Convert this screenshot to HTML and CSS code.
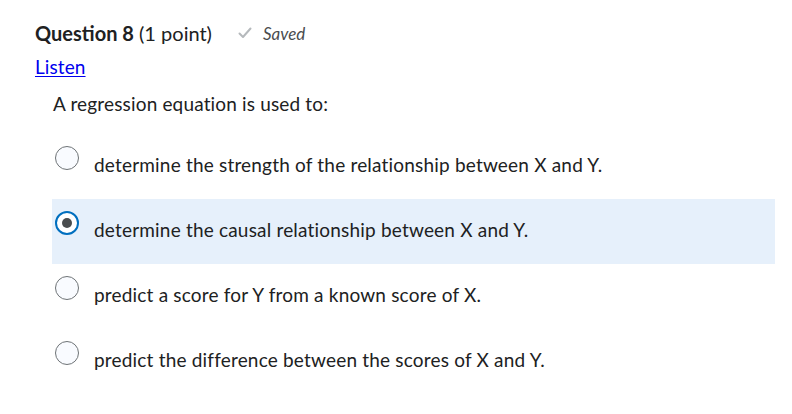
FILE: index.html
```html
<!DOCTYPE html>
<html>
<head>
<meta charset="utf-8">
<link rel="stylesheet" href="styles.css">
</head>
<body>
<div class="question">
  <div class="header">
    <h2 class="title"><strong>Question 8</strong> <span class="points">(1 point)</span></h2>
    <span class="saved">
      <svg class="check" width="14" height="12" viewBox="0 0 14 12"><path d="M1.5 6.5 L5 10 L12.5 1.5" fill="none" stroke="#b5b9bc" stroke-width="2" stroke-linecap="round" stroke-linejoin="round"/></svg>
      <em>Saved</em>
    </span>
  </div>
  <a class="listen" href="#">Listen</a>
  <p class="prompt">A regression equation is used to:</p>
  <div class="options">
    <label class="option"><span class="radio"></span><span class="text">determine the strength of the relationship between X and Y.</span></label>
    <label class="option selected"><span class="radio checked"></span><span class="text">determine the causal relationship between X and Y.</span></label>
    <label class="option"><span class="radio"></span><span class="text">predict a score for Y from a known score of X.</span></label>
    <label class="option"><span class="radio"></span><span class="text">predict the difference between the scores of X and Y.</span></label>
  </div>
</div>
</body>
</html>
```
FILE: styles.css
```css
html, body {
  margin: 0;
  padding: 0;
  background: #ffffff;
}
body {
  font-family: Lato, "Noto Sans", sans-serif;
  color: #202122;
}
.question {
  padding: 20px 0 0 35px;
  width: 740px;
}
.header {
  display: flex;
  align-items: center;
  height: 26px;
}
.title {
  margin: 0;
  font-size: 20px;
  font-weight: 400;
  line-height: 26px;
  white-space: nowrap;
}
.title strong {
  font-weight: 700;
}
.saved {
  display: flex;
  align-items: center;
  margin-left: 26px;
  color: #494c4e;
  font-size: 17px;
}
.check {
  margin-right: 11px;
}
.listen {
  display: inline-block;
  margin-top: 8px;
  color: #0000ee;
  font-size: 19px;
  line-height: 26px;
  letter-spacing: 0.1px;
  text-decoration: underline;
  text-underline-offset: 2px;
}
.prompt {
  margin: 11px 0 0 18px;
  font-size: 19px;
  line-height: 26px;
  letter-spacing: 0.16px;
}
.options {
  margin: 17px 0 0 17px;
  width: 723px;
}
.option {
  display: flex;
  align-items: flex-start;
  height: 65px;
  padding-left: 3px;
}
.option.selected {
  background: #e6f0fb;
}
.radio {
  box-sizing: border-box;
  width: 24px;
  height: 24px;
  border-radius: 50%;
  border: 1px solid #6e7376;
  background: #f9fbff;
  margin: 12px 15px 0 0;
  position: relative;
  flex: none;
}
.radio.checked {
  border: 2px solid #006fbf;
  background: #ffffff;
}
.radio.checked::after {
  content: "";
  position: absolute;
  left: 50%;
  top: 50%;
  width: 10px;
  height: 10px;
  margin: -5px 0 0 -5px;
  border-radius: 50%;
  background: #494c4e;
}
.text {
  padding-top: 18px;
  font-size: 19px;
  line-height: 26px;
  letter-spacing: 0.19px;
}
```
